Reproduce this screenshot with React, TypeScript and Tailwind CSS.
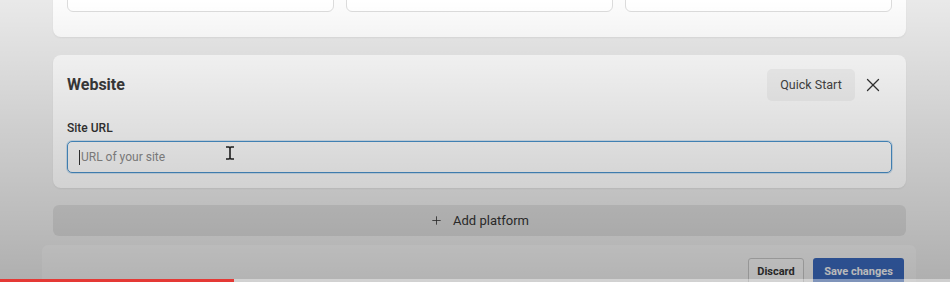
import { Plus, X } from "lucide-react";

function FieldBox({ value }: { value?: string }) {
  return (
    <div className="h-[32px] rounded-[6px] border border-[#dcdcdc] bg-white px-[11px] flex items-center text-[13px] text-[#444]">
      {value}
    </div>
  );
}

export default function App() {
  return (
    <div
      className="relative h-[282px] w-[950px] overflow-hidden bg-[#e9e9e9]"
      style={{ fontFamily: "Roboto, 'Liberation Sans', sans-serif" }}
    >
      <div className="ml-[53px] w-[853px] flex flex-col">
        {/* address card, scrolled mostly out of view */}
        <div className="-mt-[40px] rounded-[8px] bg-[#fcfcfc] px-[14px] pt-[20px] pb-[25px] shadow-[0_1px_2px_rgba(0,0,0,0.06)]">
          <div className="grid grid-cols-3 gap-[12px]">
            <FieldBox />
            <FieldBox />
            <FieldBox value="United States" />
          </div>
        </div>

        {/* website platform */}
        <div className="mt-[18px] rounded-[8px] bg-[#fcfcfc] px-[14px] pt-[14px] pb-[15px] shadow-[0_1px_2px_rgba(0,0,0,0.06)]">
          <div className="flex items-center justify-between h-[32px]">
            <h2 className="text-[16px] font-bold text-[#3a3a3a]">Website</h2>
            <div className="flex items-center gap-[7px] mr-[8px]">
              <button className="h-[32px] w-[88px] rounded-[5px] bg-[#f1f1f1] text-[12.5px] text-[#444]">
                Quick Start
              </button>
              <X size={22} strokeWidth={1.4} className="text-[#333]" />
            </div>
          </div>
          <div className="mt-[20px] text-[12px] font-medium text-[#333] leading-[14px]">
            Site URL
          </div>
          <div className="relative mt-[6px] h-[32px] rounded-[5px] border border-[#4a92cc] shadow-[0_0_0_1px_rgba(90,160,210,0.25)] bg-[#fdfdfd] flex items-center pl-[11px] text-[12px] text-[#8c8c8c]">
            <span className="mr-[1px] h-[15px] w-px bg-[#333]" />
            URL of your site
            {/* mouse i-beam */}
            <svg
              className="absolute left-[157px] top-[4px]"
              width="10"
              height="14"
              viewBox="0 0 10 14"
            >
              <path
                d="M1 1h3l1 1 1-1h3M5 2v10M1 13h3l1-1 1 1h3"
                fill="none"
                stroke="#222"
                strokeWidth="1.6"
              />
            </svg>
          </div>
        </div>

        {/* add platform */}
        <button className="mt-[17px] h-[31px] rounded-[6px] bg-[#d7d7d7] flex items-center justify-center gap-[10px] text-[13px] text-[#333]">
          <Plus size={13} strokeWidth={1.5} />
          Add platform
        </button>
      </div>

      {/* sticky footer with actions */}
      <div className="ml-[42px] mt-[9px] w-[874px] h-[60px] rounded-t-[6px] bg-[#efefef] flex justify-end pr-[12px] pt-[13px]">
        <div className="flex gap-[9px]">
          <button className="h-[28px] w-[56px] rounded-[3px] border border-[#c4c4c4] bg-[#f3f3f3] text-[11px] font-bold text-[#333]">
            Discard
          </button>
          <button className="h-[28px] w-[91px] rounded-[3px] bg-[#3967ba] text-[11px] font-bold text-[#f4f4f4]">
            Save changes
          </button>
        </div>
      </div>

      {/* video vignette */}
      <div className="pointer-events-none absolute inset-0 bg-linear-to-b from-black/0 to-black/25" />

      {/* player progress bar */}
      <div className="absolute left-0 right-0 bottom-0 h-[3px] flex">
        <div className="w-[234px] bg-[#e53935]" />
        <div className="flex-1 bg-white/40" />
      </div>
    </div>
  );
}
